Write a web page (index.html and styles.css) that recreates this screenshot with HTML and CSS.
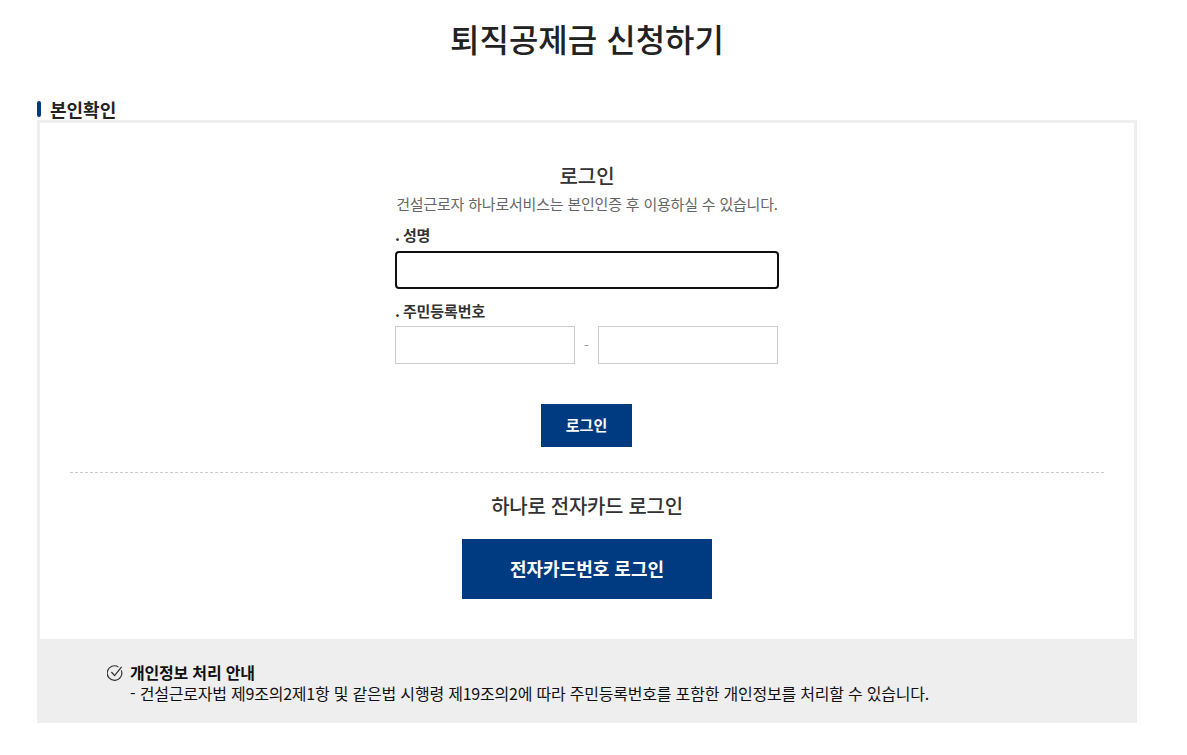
FILE: index.html
```html
<!DOCTYPE html>
<html lang="ko">
<head>
    <meta charset="UTF-8">
    <title>퇴직공제금 신청하기</title>
    <link rel="stylesheet" href="styles.css">
</head>
<body>
<div class="wrapper">
    <h1 class="page-title">퇴직공제금 신청하기</h1>
    <h2 class="section-title">본인확인</h2>
    <section class="box">
        <div class="login">
            <h3 class="login-title">로그인</h3>
            <p class="login-desc">건설근로자 하나로서비스는 본인인증 후 이용하실 수 있습니다.</p>
            <label class="field-label" for="name">. 성명</label>
            <input class="name-input" id="name" type="text">
            <label class="field-label second" for="rrn1">. 주민등록번호</label>
            <div class="rrn">
                <input class="rrn-input" id="rrn1" type="text">
                <span class="rrn-dash">-</span>
                <input class="rrn-input" id="rrn2" type="text">
            </div>
            <div class="btn-row">
                <button class="btn-login" type="button">로그인</button>
            </div>
        </div>
        <div class="card-login">
            <h3 class="card-title">하나로 전자카드 로그인</h3>
            <button class="btn-card" type="button">전자카드번호 로그인</button>
        </div>
    </section>
    <section class="notice">
        <div class="notice-head">
            <svg class="notice-icon" width="16" height="16" viewBox="0 0 16 16" fill="none" stroke="#333" stroke-width="1.2">
                <path d="M14.3 5.4A7.3 7.3 0 1 1 11.4 1.9"/>
                <path d="M4.4 7l3.2 3.6L14.6 1.8" stroke-width="1.3"/>
            </svg>
            <strong>개인정보 처리 안내</strong>
        </div>
        <p class="notice-text">- 건설근로자법 제9조의2제1항 및 같은법 시행령 제19조의2에 따라 주민등록번호를 포함한 개인정보를 처리할 수 있습니다.</p>
    </section>
</div>
</body>
</html>
```

FILE: styles.css
```css
*{margin:0;padding:0;box-sizing:border-box}
body{
    background:#fff;
    color:#222;
    font-family:"Noto Sans CJK KR","Noto Sans",sans-serif;
}
input{outline:none;background:#fff}
button{border:0;font-family:inherit;color:#fff;background:#003a80}
.wrapper{
    width:1100px;
    margin-left:37px;
}
.page-title{
    height:99px;
    padding-top:15px;
    font-size:32px;
    line-height:46px;
    font-weight:500;
    text-align:center;
}
.section-title{
    position:relative;
    height:21px;
    padding-left:13px;
    font-size:18px;
    line-height:20px;
    font-weight:700;
}
.section-title:before{
    content:'';
    position:absolute;
    left:0;
    top:2px;
    width:4px;
    height:16px;
    border-radius:2px;
    background:#003a80;
}
/*본인확인 박스*/
.box{
    height:519px;
    border:3px solid #eee;
    border-bottom:0;
    padding:0 30px;
}
.login{
    width:384px;
    margin:0 auto;
    padding-top:39px;
}
.login-title{
    font-size:20px;
    line-height:28px;
    font-weight:500;
    text-align:center;
    color:#333;
}
.login-desc{
    margin-top:3px;
    font-size:15px;
    line-height:21px;
    letter-spacing:-0.2px;
    color:#666;
    text-align:center;
    white-space:nowrap;
}
.field-label{
    display:block;
    margin-top:10px;
    font-size:15px;
    line-height:21px;
    letter-spacing:-0.1px;
    word-spacing:-1px;
    font-weight:700;
    color:#333;
}
.field-label.second{margin-top:11px}
.name-input{
    display:block;
    width:384px;
    height:38px;
    margin-top:6px;
    border:2px solid #101010;
    border-radius:4px;
}
.rrn{
    display:flex;
    align-items:center;
    justify-content:space-between;
    width:383px;
    margin-top:5px;
}
.rrn-input{
    width:180px;
    height:38px;
    border:1px solid #ccc;
}
.rrn-dash{font-size:14px;color:#999}
.btn-row{
    margin-top:40px;
    padding-right:1px;
    text-align:center;
}
.btn-login{
    width:91px;
    height:43px;
    font-size:15px;
    line-height:20px;
    padding-bottom:2px;
    font-weight:700;
}
.card-login{
    margin-top:25px;
    padding-top:19px;
    border-top:1px dashed #ccc;
    text-align:center;
}
.card-title{
    font-size:20px;
    line-height:28px;
    letter-spacing:-0.3px;
    font-weight:500;
    color:#333;
}
.btn-card{
    display:block;
    width:250px;
    height:60px;
    margin:19px auto 0;
    padding-bottom:2px;
    font-size:18px;
    font-weight:700;
}
/*안내*/
.notice{
    height:84px;
    padding:23px 0 0 70px;
    background:#eee;
    font-size:16px;
    line-height:21px;
    letter-spacing:-0.2px;
    color:#111;
}
.notice-head{
    display:flex;
    align-items:center;
    gap:7px;
}
.notice-head strong{font-weight:700}
.notice-text{
    padding-left:23px;
    letter-spacing:-0.21px;
    white-space:nowrap;
}
```
